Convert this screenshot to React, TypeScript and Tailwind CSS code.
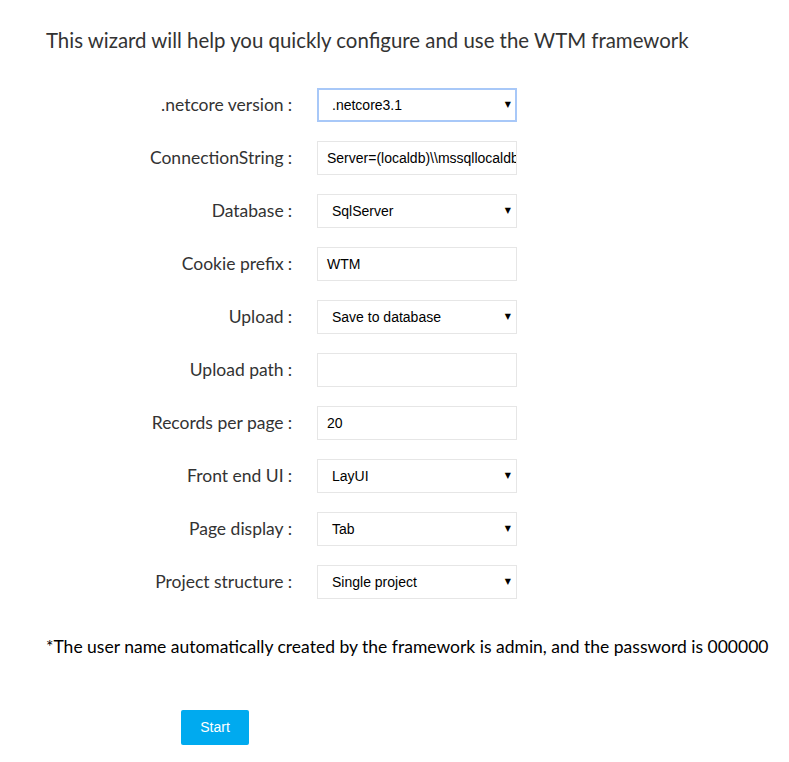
import React from 'react';

interface FieldRow {
  label: string;
  kind: 'select' | 'input';
  value: string;
  focused?: boolean;
}

const rows: FieldRow[] = [
  { label: '.netcore version', kind: 'select', value: '.netcore3.1', focused: true },
  { label: 'ConnectionString', kind: 'input', value: 'Server=(localdb)\\\\mssqllocaldb;Database=wtm;Trusted_Connection=True;' },
  { label: 'Database', kind: 'select', value: 'SqlServer' },
  { label: 'Cookie prefix', kind: 'input', value: 'WTM' },
  { label: 'Upload', kind: 'select', value: 'Save to database' },
  { label: 'Upload path', kind: 'input', value: '' },
  { label: 'Records per page', kind: 'input', value: '20' },
  { label: 'Front end UI', kind: 'select', value: 'LayUI' },
  { label: 'Page display', kind: 'select', value: 'Tab' },
  { label: 'Project structure', kind: 'select', value: 'Single project' },
];

const Row: React.FC<{ row: FieldRow }> = ({ row }) => {
  const box = row.focused
    ? 'border-2 border-[#a8c8f8]'
    : 'border border-[#e6e6e6]';
  return (
    <div className="flex items-center h-[34px] mb-[19px]">
      <label className="w-[292px] text-right text-[17.5px] text-[#333] whitespace-nowrap font-['Lato',sans-serif]">
        {row.label}
        <span className="ml-[4px]">:</span>
      </label>
      <div className={`ml-[25px] w-[200px] h-[34px] bg-white flex items-center overflow-hidden ${box}`}>
        {row.kind === 'select' ? (
          <div className={`flex items-center w-full ${row.focused ? 'pl-[13px] pr-[4px]' : 'pl-[14px] pr-[5px]'}`}>
            <span className="flex-1 text-[14px] text-black font-['Liberation_Sans',Arial,sans-serif]">{row.value}</span>
            <span className="text-[8px] text-black font-['DejaVu_Sans',sans-serif]">▼</span>
          </div>
        ) : (
          <span className="pl-[9px] text-[14px] text-black whitespace-nowrap font-['Liberation_Sans',Arial,sans-serif]">{row.value}</span>
        )}
      </div>
    </div>
  );
};

export default function App() {
  return (
    <div className="min-h-[762px] bg-white font-['Lato',sans-serif] text-[#333]">
      <h1 className="pl-[46px] pt-[26px] text-[20.4px] leading-[28px] font-normal">
        This wizard will help you quickly configure and use the WTM framework
      </h1>
      <div className="mt-[34px]">
        {rows.map((r) => (
          <Row key={r.label} row={r} />
        ))}
      </div>
      <p className="pl-[46px] mt-[36px] text-[17.5px] leading-[24px] text-black whitespace-nowrap">
        *The user name automatically created by the framework is admin, and the password is 000000
      </p>
      <div className="pl-[181px] mt-[51px]">
        <button className="w-[68px] h-[35px] rounded-[2px] bg-[#00aaef] text-white text-[14px] font-['Liberation_Sans',Arial,sans-serif]">
          Start
        </button>
      </div>
    </div>
  );
}
